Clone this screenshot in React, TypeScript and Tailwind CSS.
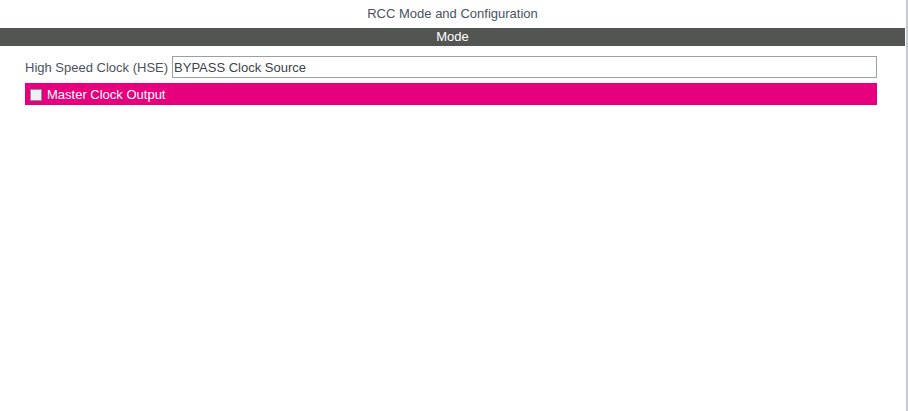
export default function App() {
  return (
    <div className="flex h-[411px] w-[908px] bg-white font-['Liberation_Sans',Arial,sans-serif] text-[13px]">
      <div className="flex flex-1 flex-col">
        <div className="flex h-[28px] items-center justify-center text-[#4c5260]">
          RCC Mode and Configuration
        </div>
        <div className="flex h-[18px] items-center justify-center bg-[#535553] text-white">Mode</div>
        <div className="flex flex-col gap-[5px] pl-[25px] pr-[28px] pt-[10px]">
          <div className="flex items-center gap-[4px] pt-[1px]">
            <span className="text-[#4c5260]">High Speed Clock (HSE)</span>
            <div className="-mt-[1px] flex h-[22px] flex-1 items-center border border-[#9aa0a6] px-[1px] pt-[1px] text-[#3c414c]">
              BYPASS Clock Source
            </div>
          </div>
          <div className="flex h-[22px] items-center gap-[5px] bg-[#e6007e] pl-[5px] pt-[1px] text-white">
            <span className="h-[12px] w-[12px] border border-[#8a8f96] bg-[#eef0f3]" />
            <span>Master Clock Output</span>
          </div>
        </div>
      </div>
      <div className="ml-[1px] w-[2px] bg-[#c2cad3]" />
    </div>
  );
}
